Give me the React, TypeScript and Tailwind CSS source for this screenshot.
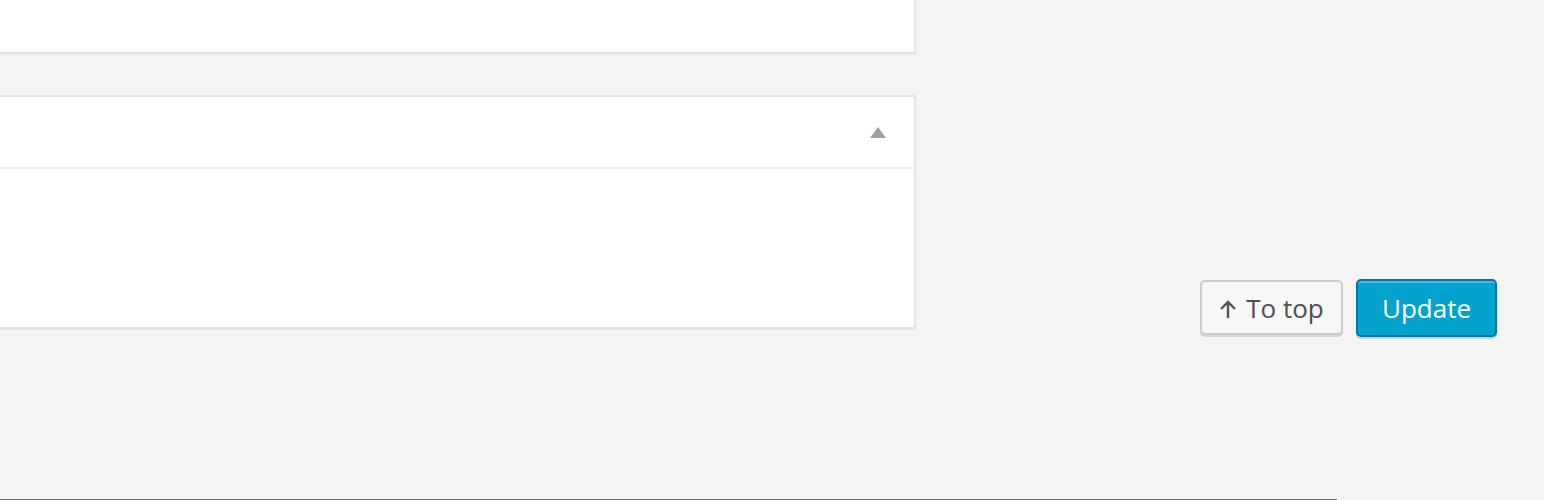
import React from "react";

export default function App() {
  return (
    <div className="h-[500px] w-full bg-[#f4f4f4] flex flex-col overflow-hidden" style={{ fontFamily: '"Open Sans", "Noto Sans", sans-serif' }}>
      <div className="flex h-[499px]">
        <div className="w-[916px] shrink-0 flex flex-col">
          <div className="h-[54px] bg-white border-r-2 border-b-2 border-[#e5e5e5] shadow-[0_1px_1px_rgba(0,0,0,0.04)]" />
          <div className="mt-[41px] bg-white border-y-2 border-r-2 border-[#e5e5e5] shadow-[0_1px_1px_rgba(0,0,0,0.04)] flex flex-col">
            <div className="h-[72px] border-b-2 border-[#eeeeee] flex items-center justify-end pr-[28px]">
              <svg width="16" height="12" viewBox="0 0 16 12" className="mt-[2px]">
                <polygon points="8,0 16,11 0,11" fill="#a0a0a0" />
              </svg>
            </div>
            <div className="h-[158px]" />
          </div>
        </div>
        <div className="flex-1 flex items-start justify-end pt-[279px] pr-[47px] gap-[13px]">
          <button className="mt-px w-[143px] h-[55px] rounded-[5px] border-2 border-[#cccccc] bg-[#f7f7f7] shadow-[0_2px_0_#d4d4d4] flex items-center justify-center gap-[9px] text-[#4f4f4f] text-[26px] leading-none">
            <svg width="18" height="20" viewBox="0 0 18 20" className="mt-[2px]">
              <path d="M9 19V3M2 10L9 3L16 10" fill="none" stroke="#555555" strokeWidth="2.4" />
            </svg>
            <span>To top</span>
          </button>
          <button className="w-[141px] h-[58px] rounded-[5px] border-2 border-[#0073aa] bg-[#03a3cd] shadow-[inset_0_2px_0_rgba(120,200,230,0.6),0_2px_0_rgba(0,0,0,0.15)] flex items-center justify-center text-white text-[26px] leading-none">
            Update
          </button>
        </div>
      </div>
      <div className="w-[1337px] h-px bg-[#707070]" />
    </div>
  );
}
